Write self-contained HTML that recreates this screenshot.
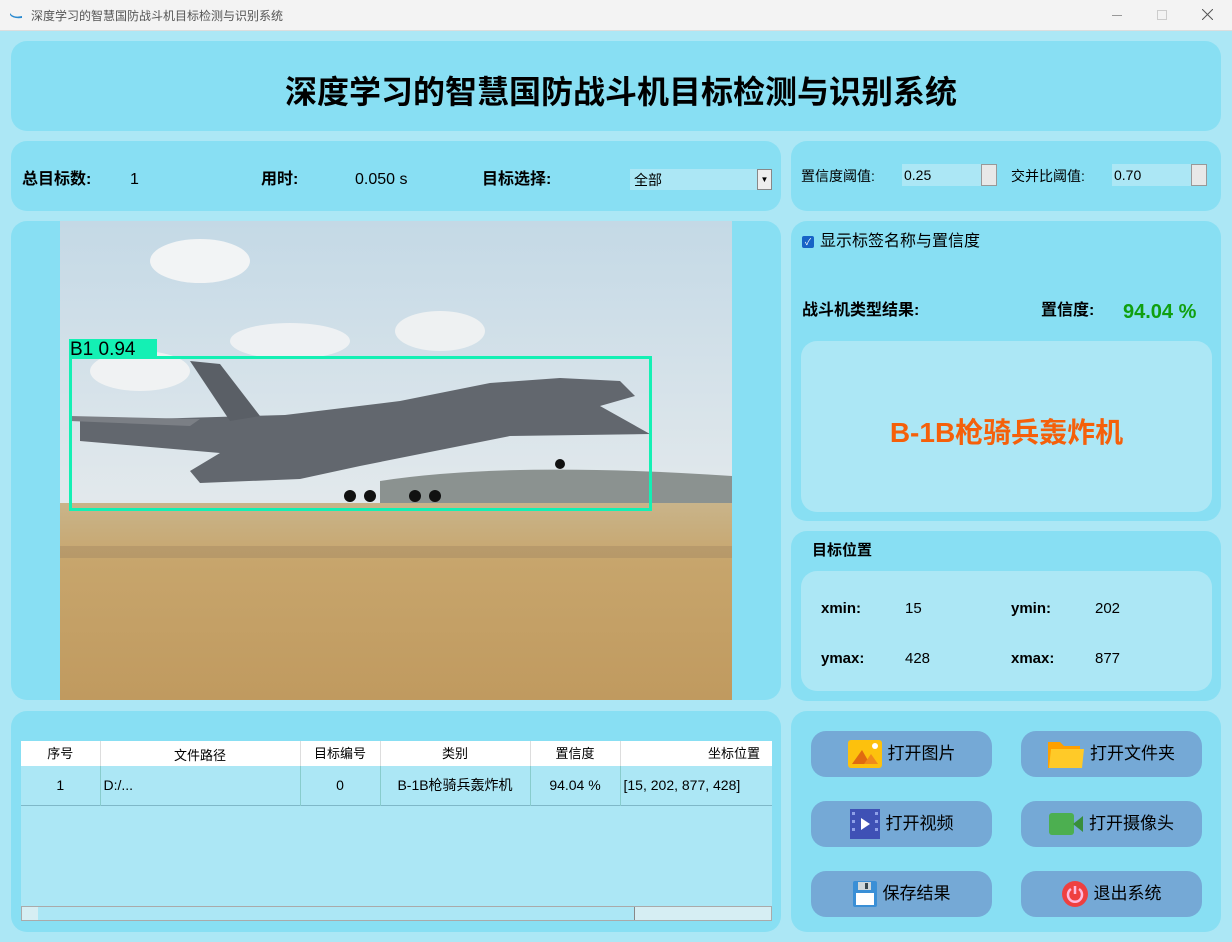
<!DOCTYPE html>
<html><head><meta charset="utf-8"><style>
*{margin:0;padding:0;box-sizing:border-box}
body{width:1232px;height:942px;background:#ace7f5;font-family:"Liberation Sans","Noto Sans CJK SC",sans-serif;position:relative;overflow:hidden;color:#000;line-height:20px}
.a{position:absolute}
.p{position:absolute;background:#88dff3;border-radius:16px}
.tb{position:absolute;left:0;top:0;width:1232px;height:31px;background:#f3f3f3;border-bottom:1px solid #ddd;font-size:12px;color:#555}
.b{font-weight:bold}
.btn{position:absolute;width:181px;height:46px;background:#75a9d6;border-radius:15px;font-size:17px;display:flex;align-items:center;justify-content:center;gap:6px}
.spin{position:absolute;height:22px;background:#ace7f5;font-size:14px;padding:1px 2px;line-height:20px}
.sb{position:absolute;right:0;top:0;width:16px;height:22px;background:#e8e8e8;border:1px solid #999}
table{border-collapse:collapse;font-size:13px;line-height:16px}
</style></head><body>
<div class="tb"><svg class="a" style="left:9px;top:11px" width="14" height="8"><path d="M1 2 Q4 7 13 5 L13 7 Q4 8 1 4Z" fill="#2a8ad0"/></svg><span class="a" style="left:31px;top:6px">深度学习的智慧国防战斗机目标检测与识别系统</span>
<div class="a" style="left:1112px;top:15px;width:10px;height:1px;background:#999"></div><div class="a" style="left:1157px;top:10px;width:10px;height:10px;border:1px solid #ccc"></div><svg class="a" style="left:1202px;top:9px" width="11" height="11"><path d="M0 0L11 11M11 0L0 11" stroke="#555" stroke-width="1"/></svg></div>

<div class="p" style="left:11px;top:41px;width:1210px;height:90px"></div>
<div class="a b" style="left:0;width:1242px;top:72px;line-height:40px;text-align:center;font-size:32px">深度学习的智慧国防战斗机目标检测与识别系统</div>

<div class="p" style="left:11px;top:141px;width:770px;height:70px"></div>
<div class="a b" style="left:22px;top:170px;font-size:16px">总目标数:</div>
<div class="a" style="left:130px;top:170px;font-size:16px">1</div>
<div class="a b" style="left:261px;top:170px;font-size:16px">用时:</div>
<div class="a" style="left:355px;top:170px;font-size:16px">0.050 s</div>
<div class="a b" style="left:482px;top:170px;font-size:16px">目标选择:</div>
<div class="a" style="left:630px;top:169px;width:142px;height:21px;background:#ace7f5;font-size:14px;padding:1px 4px">全部<div class="a" style="right:0;top:0;width:15px;height:21px;background:#eee;border:1px solid #888;font-size:8px;text-align:center;line-height:19px">▼</div></div>

<div class="p" style="left:791px;top:141px;width:430px;height:70px"></div>
<div class="a" style="left:801px;top:166px;font-size:14px">置信度阈值:</div>
<div class="spin" style="left:902px;top:164px;width:95px">0.25<div class="sb"></div></div>
<div class="a" style="left:1011px;top:166px;font-size:14px">交并比阈值:</div>
<div class="spin" style="left:1112px;top:164px;width:95px">0.70<div class="sb"></div></div>

<div class="p" style="left:11px;top:221px;width:770px;height:479px"></div>
<svg class="a" style="left:60px;top:221px" width="672" height="479">
<defs><linearGradient id="s" x1="0" y1="0" x2="0" y2="1"><stop offset="0" stop-color="#c4d9e6"/><stop offset=".6" stop-color="#e3e9ec"/><stop offset="1" stop-color="#d6d9d8"/></linearGradient>
<linearGradient id="g" x1="0" y1="0" x2="0" y2="1"><stop offset="0" stop-color="#c9b48a"/><stop offset=".3" stop-color="#c7a56c"/><stop offset="1" stop-color="#c09a5f"/></linearGradient></defs>
<rect width="672" height="479" fill="url(#s)"/>
<ellipse cx="140" cy="40" rx="50" ry="22" fill="#f2f4f5"/><ellipse cx="230" cy="120" rx="60" ry="18" fill="#eef1f3"/><ellipse cx="380" cy="110" rx="45" ry="20" fill="#eef1f2"/><ellipse cx="80" cy="150" rx="50" ry="20" fill="#f0f2f3"/>
<path d="M320 260 Q450 240 672 255 L672 290 L320 290Z" fill="#8b9290"/>
<rect y="282" width="672" height="197" fill="url(#g)"/>
<rect y="325" width="672" height="12" fill="#a88c64" opacity=".5"/>
<path d="M20 200 L225 194 L340 180 L430 162 L500 157 L560 160 L575 175 L540 185 L590 213 L450 215 L300 245 L240 258 L140 262 L130 250 L160 232 L20 220 Z" fill="#62676e"/>
<path d="M130 140 L160 143 L200 195 L170 200 Z" fill="#5a5f66"/>
<path d="M10 195 L140 198 L130 205 L10 200Z" fill="#7b7f85"/>
<circle cx="290" cy="275" r="6" fill="#111"/><circle cx="310" cy="275" r="6" fill="#111"/><circle cx="355" cy="275" r="6" fill="#111"/><circle cx="375" cy="275" r="6" fill="#111"/><circle cx="500" cy="243" r="5" fill="#111"/>
<rect x="10.5" y="136.5" width="580" height="152" fill="none" stroke="#14f0b4" stroke-width="3"/>
<rect x="9" y="118" width="88" height="18" fill="#14f0b4"/>
<text x="10" y="134" font-family="Liberation Sans" font-size="19" fill="#000">B1  0.94</text>
</svg>

<div class="p" style="left:791px;top:221px;width:430px;height:300px"></div>
<div class="a" style="left:802px;top:236px;width:12px;height:12px;background:#1763c6;border-radius:2px;color:#fff;font-size:9px;text-align:center;line-height:12px">✓</div>
<div class="a" style="left:820px;top:232px;font-size:16px">显示标签名称与置信度</div>
<div class="a b" style="left:802px;top:301px;font-size:16px">战斗机类型结果:</div>
<div class="a b" style="left:1041px;top:301px;font-size:16px">置信度:</div>
<div class="a b" style="left:1123px;top:301px;font-size:20px;line-height:22px;color:#10a010">94.04 %</div>
<div class="a" style="left:801px;top:341px;width:411px;height:171px;background:#ace7f5;border-radius:16px"></div>
<div class="a b" style="left:801px;width:411px;top:416px;line-height:34px;text-align:center;font-size:28px;color:#f5600a">B-1B枪骑兵轰炸机</div>

<div class="p" style="left:791px;top:531px;width:430px;height:170px"></div>
<div class="a b" style="left:812px;top:541px;font-size:15px">目标位置</div>
<div class="a" style="left:801px;top:571px;width:411px;height:120px;background:#ace7f5;border-radius:16px"></div>
<div class="a b" style="left:821px;top:599px;font-size:15px">xmin:</div><div class="a" style="left:905px;top:599px;font-size:15px">15</div>
<div class="a b" style="left:1011px;top:599px;font-size:15px">ymin:</div><div class="a" style="left:1095px;top:599px;font-size:15px">202</div>
<div class="a b" style="left:821px;top:649px;font-size:15px">ymax:</div><div class="a" style="left:905px;top:649px;font-size:15px">428</div>
<div class="a b" style="left:1011px;top:649px;font-size:15px">xmax:</div><div class="a" style="left:1095px;top:649px;font-size:15px">877</div>

<div class="p" style="left:11px;top:711px;width:770px;height:221px"></div>
<div class="a" style="left:21px;top:741px;width:751px;height:180px;background:#ace7f5">
<table style="width:751px">
<tr style="background:#fff;height:25px"><td style="width:79px;text-align:center;border-right:1px solid #ddd">序号</td><td style="width:200px;text-align:center;border-right:1px solid #ddd;padding-top:4px">文件路径</td><td style="width:80px;text-align:center;border-right:1px solid #ddd">目标编号</td><td style="width:150px;text-align:center;border-right:1px solid #ddd">类别</td><td style="width:90px;text-align:center;border-right:1px solid #ddd">置信度</td><td style="text-align:right;padding-right:12px">坐标位置</td></tr>
<tr style="height:39px;font-size:14px;border-bottom:1px solid #7fb8c8"><td style="text-align:center;border-right:1px solid #8cc">1</td><td style="border-right:1px solid #8cc;padding-left:3px">D:/...</td><td style="text-align:center;border-right:1px solid #8cc">0</td><td style="text-align:center;border-right:1px solid #8cc">B-1B枪骑兵轰炸机</td><td style="text-align:center;border-right:1px solid #8cc">94.04 %</td><td style="padding-left:3px">[15, 202, 877, 428]</td></tr>
</table>
<div class="a" style="left:0;top:165px;width:751px;height:15px;background:#d6eef3;border:1px solid #aaa"><div class="a" style="left:16px;top:0;width:597px;height:13px;background:#ace7f5;border-right:1px solid #888"></div></div>
</div>

<div class="p" style="left:791px;top:711px;width:430px;height:221px"></div>
<div class="btn" style="left:811px;top:731px"><svg width="34" height="28"><rect width="34" height="28" rx="3" fill="#fdc10d"/><path d="M4 24 L14 10 L22 24Z" fill="#e06a10"/><path d="M16 24 L23 14 L30 24Z" fill="#f08a1a"/><circle cx="27" cy="6" r="3" fill="#fff"/></svg>打开图片</div>
<div class="btn" style="left:1021px;top:731px"><svg width="36" height="28"><path d="M0 2 h12 l4 4 h16 v22 h-32z" fill="#ffa000"/><path d="M3 9 h33 l-2 19 h-33z" fill="#ffca28"/></svg>打开文件夹</div>
<div class="btn" style="left:811px;top:801px"><svg width="30" height="30"><rect width="30" height="30" fill="#3f51b5"/><path d="M11 9 L20 15 L11 21Z" fill="#fff"/><g fill="#8fa0e8"><rect x="2" y="3" width="3" height="3"/><rect x="2" y="11" width="3" height="3"/><rect x="2" y="19" width="3" height="3"/><rect x="25" y="3" width="3" height="3"/><rect x="25" y="11" width="3" height="3"/><rect x="25" y="19" width="3" height="3"/></g></svg>打开视频</div>
<div class="btn" style="left:1021px;top:801px"><svg width="34" height="22"><rect width="25" height="22" rx="3" fill="#4caf50"/><path d="M24 11 L34 3 V19Z" fill="#388e3c"/></svg>打开摄像头</div>
<div class="btn" style="left:811px;top:871px"><svg width="24" height="26"><rect width="24" height="26" rx="2" fill="#3a8fd6"/><rect x="5" y="1" width="13" height="8" fill="#cfd8dc"/><rect x="12" y="2" width="3" height="6" fill="#37474f"/><rect x="3" y="12" width="18" height="12" fill="#fff"/></svg>保存结果</div>
<div class="btn" style="left:1021px;top:871px"><svg width="26" height="26"><circle cx="13" cy="13" r="13" fill="#ef4040"/><path d="M9 8 A7 7 0 1 0 17 8" fill="none" stroke="#fbd" stroke-width="2.5"/><path d="M13 5 V13" stroke="#fbd" stroke-width="2.5"/></svg>退出系统</div>
</body></html>
